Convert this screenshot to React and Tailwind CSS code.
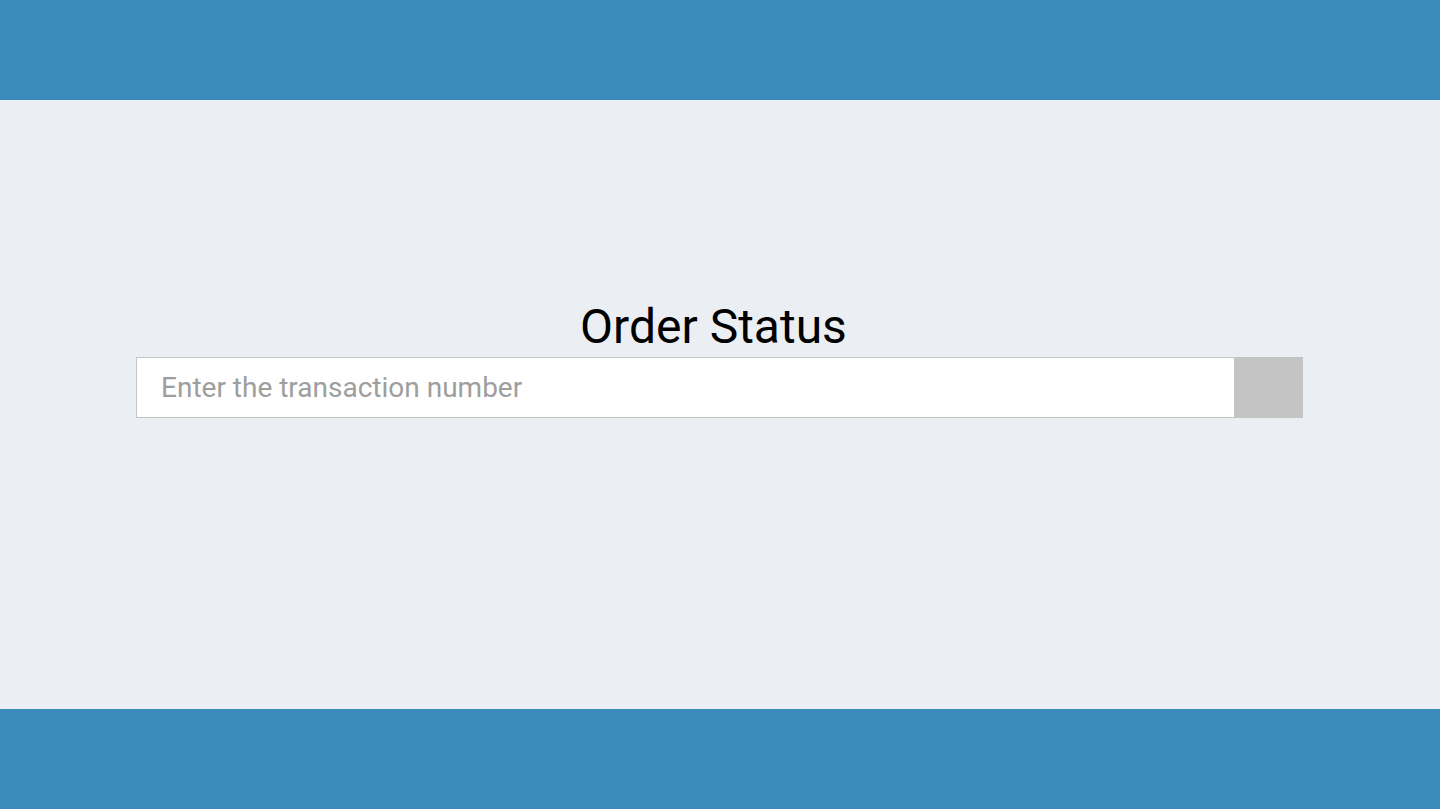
import React, { useState } from "react";

export default function App() {
    const [txn, setTxn] = useState("");

    return (
        <div className="flex h-[809px] flex-col bg-[#ebeff4] font-['Roboto',sans-serif]">
            <header className="h-[100px] shrink-0 bg-[#3b8bbd]" />

            <main className="flex flex-1 flex-col items-center pt-[197px]">
                <h1 className="pr-[13px] text-[48px] leading-[60px] font-normal text-black">Order Status</h1>
                <div className="mr-px flex w-[1167px]">
                    <input
                        type="text"
                        value={txn}
                        onChange={(e) => setTxn(e.target.value)}
                        placeholder="Enter the transaction number"
                        className="h-[61px] flex-1 border border-r-0 border-[#c6c6c6] bg-white px-6 text-[28px] text-gray-800 outline-none placeholder:text-[#9e9e9e]"
                    />
                    <button className="h-[61px] w-[69px] bg-[#c4c4c4]" aria-label="Search" />
                </div>
            </main>

            <footer className="h-[100px] shrink-0 bg-[#3b8bbd]" />
        </div>
    );
}
